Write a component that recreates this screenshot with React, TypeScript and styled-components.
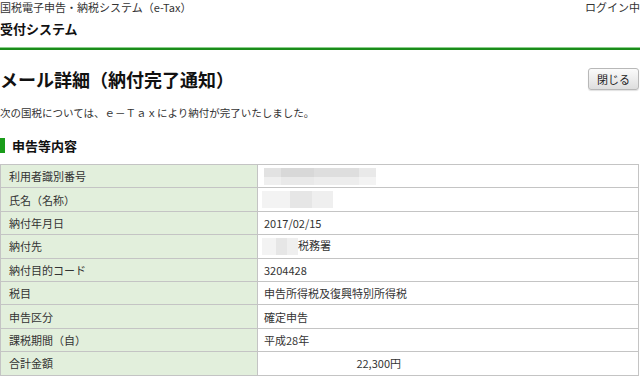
import React from 'react';
import styled, { createGlobalStyle } from 'styled-components';

const GlobalStyle = createGlobalStyle`
  html, body {
    margin: 0;
    padding: 0;
    background: #ffffff;
  }
  body {
    font-family: 'Noto Sans CJK JP', 'Noto Sans', sans-serif;
    color: #333333;
  }
`;

const Page = styled.div`
  width: 640px;
  height: 378px;
  overflow: hidden;
`;

const Header = styled.div`
  border-bottom: 2px solid #1a8c1a;
  box-shadow: 0 -1px 0 #8ccf8c inset;
  padding-bottom: 12px;
`;

const TopBar = styled.div`
  display: flex;
  justify-content: space-between;
  padding-top: 1px;
  font-size: 11px;
  line-height: 13px;
  color: #333333;
`;

const SystemName = styled.div`
  margin-top: 8px;
  font-size: 13px;
  line-height: 14px;
  font-weight: bold;
  color: #111111;
`;

const TitleRow = styled.div`
  display: flex;
  justify-content: space-between;
  align-items: center;
  margin-top: 18px;
`;

const Title = styled.h1`
  margin: 0;
  font-size: 18px;
  line-height: 22px;
  font-weight: bold;
  color: #111111;
`;

const CloseButton = styled.button`
  width: 51px;
  height: 22px;
  margin-right: 1px;
  padding: 0;
  border: 1px solid #b8b8b8;
  border-radius: 3px;
  background: linear-gradient(#fbfbfb, #dedede);
  box-shadow: 0 1px 1px rgba(0, 0, 0, 0.12);
  font-family: 'Noto Sans CJK JP', sans-serif;
  font-size: 11px;
  color: #222222;
`;

const Lead = styled.p`
  margin: 16px 0 0;
  font-size: 10.5px;
  line-height: 14px;
  color: #333333;
`;

const SectionHead = styled.h2`
  display: flex;
  align-items: center;
  gap: 7px;
  margin: 18px 0 0;
  font-size: 13px;
  line-height: 15px;
  font-weight: bold;
  color: #111111;

  &::before {
    content: '';
    width: 5px;
    height: 15px;
    background: #1a9c1a;
  }
`;

const Table = styled.table`
  margin-top: 11px;
  width: 639px;
  border-collapse: collapse;
  font-size: 11px;
  color: #333333;

  td {
    height: 22.4px;
    padding: 0 8px;
    border: 1px solid #c4c4c4;
    line-height: 14px;
  }
`;

const Label = styled.td`
  width: 240px;
  background: #e2efdc;
`;

const Value = styled.td<{ $pad?: number }>`
  background: #ffffff;
  padding-left: ${(p) => p.$pad ?? 6}px !important;
`;

const Masked = styled.span<{ $w: number }>`
  display: inline-block;
  vertical-align: middle;
  width: ${(p) => p.$w}px;
  height: 17px;
  background: linear-gradient(90deg, #e2e2e2 0 15%, #d8d8d8 15% 45%, #dedede 45% 85%, #e9e9e9 85% 100%);
  box-shadow: inset 0 -8px 0 rgba(255, 255, 255, 0.45);
`;

const MaskedLight = styled(Masked)`
  background: linear-gradient(90deg, #f3f3f3 0 40%, #e6e6e6 40% 70%, #efefef 70% 100%);
  box-shadow: none;
`;

const Amount = styled.span`
  display: inline-block;
  width: 137px;
  text-align: right;
`;

const rows: { label: string; value: React.ReactNode; pad?: number }[] = [
  { label: '利用者識別番号', value: <Masked $w={112} /> },
  { label: '氏名（名称）', value: <MaskedLight $w={71} />, pad: 4 },
  { label: '納付年月日', value: '2017/02/15' },
  {
    label: '納付先',
    value: (
      <>
        <MaskedLight $w={36} />
        税務署
      </>
    ),
    pad: 4,
  },
  { label: '納付目的コード', value: '3204428' },
  { label: '税目', value: '申告所得税及復興特別所得税' },
  { label: '申告区分', value: '確定申告' },
  { label: '課税期間（自）', value: '平成28年' },
  { label: '合計金額', value: <Amount>22,300円</Amount> },
];

const App: React.FC = () => {
  return (
    <>
      <GlobalStyle />
      <Page>
        <Header>
          <TopBar>
            <span>国税電子申告・納税システム（e-Tax）</span>
            <span>ログイン中</span>
          </TopBar>
          <SystemName>受付システム</SystemName>
        </Header>
        <TitleRow>
          <Title>メール詳細（納付完了通知）</Title>
          <CloseButton type="button">閉じる</CloseButton>
        </TitleRow>
        <Lead>次の国税については、ｅ－Ｔａｘにより納付が完了いたしました。</Lead>
        <SectionHead>申告等内容</SectionHead>
        <Table>
          <tbody>
            {rows.map((row) => (
              <tr key={row.label}>
                <Label>{row.label}</Label>
                <Value $pad={row.pad}>{row.value}</Value>
              </tr>
            ))}
          </tbody>
        </Table>
      </Page>
    </>
  );
};

export default App;
